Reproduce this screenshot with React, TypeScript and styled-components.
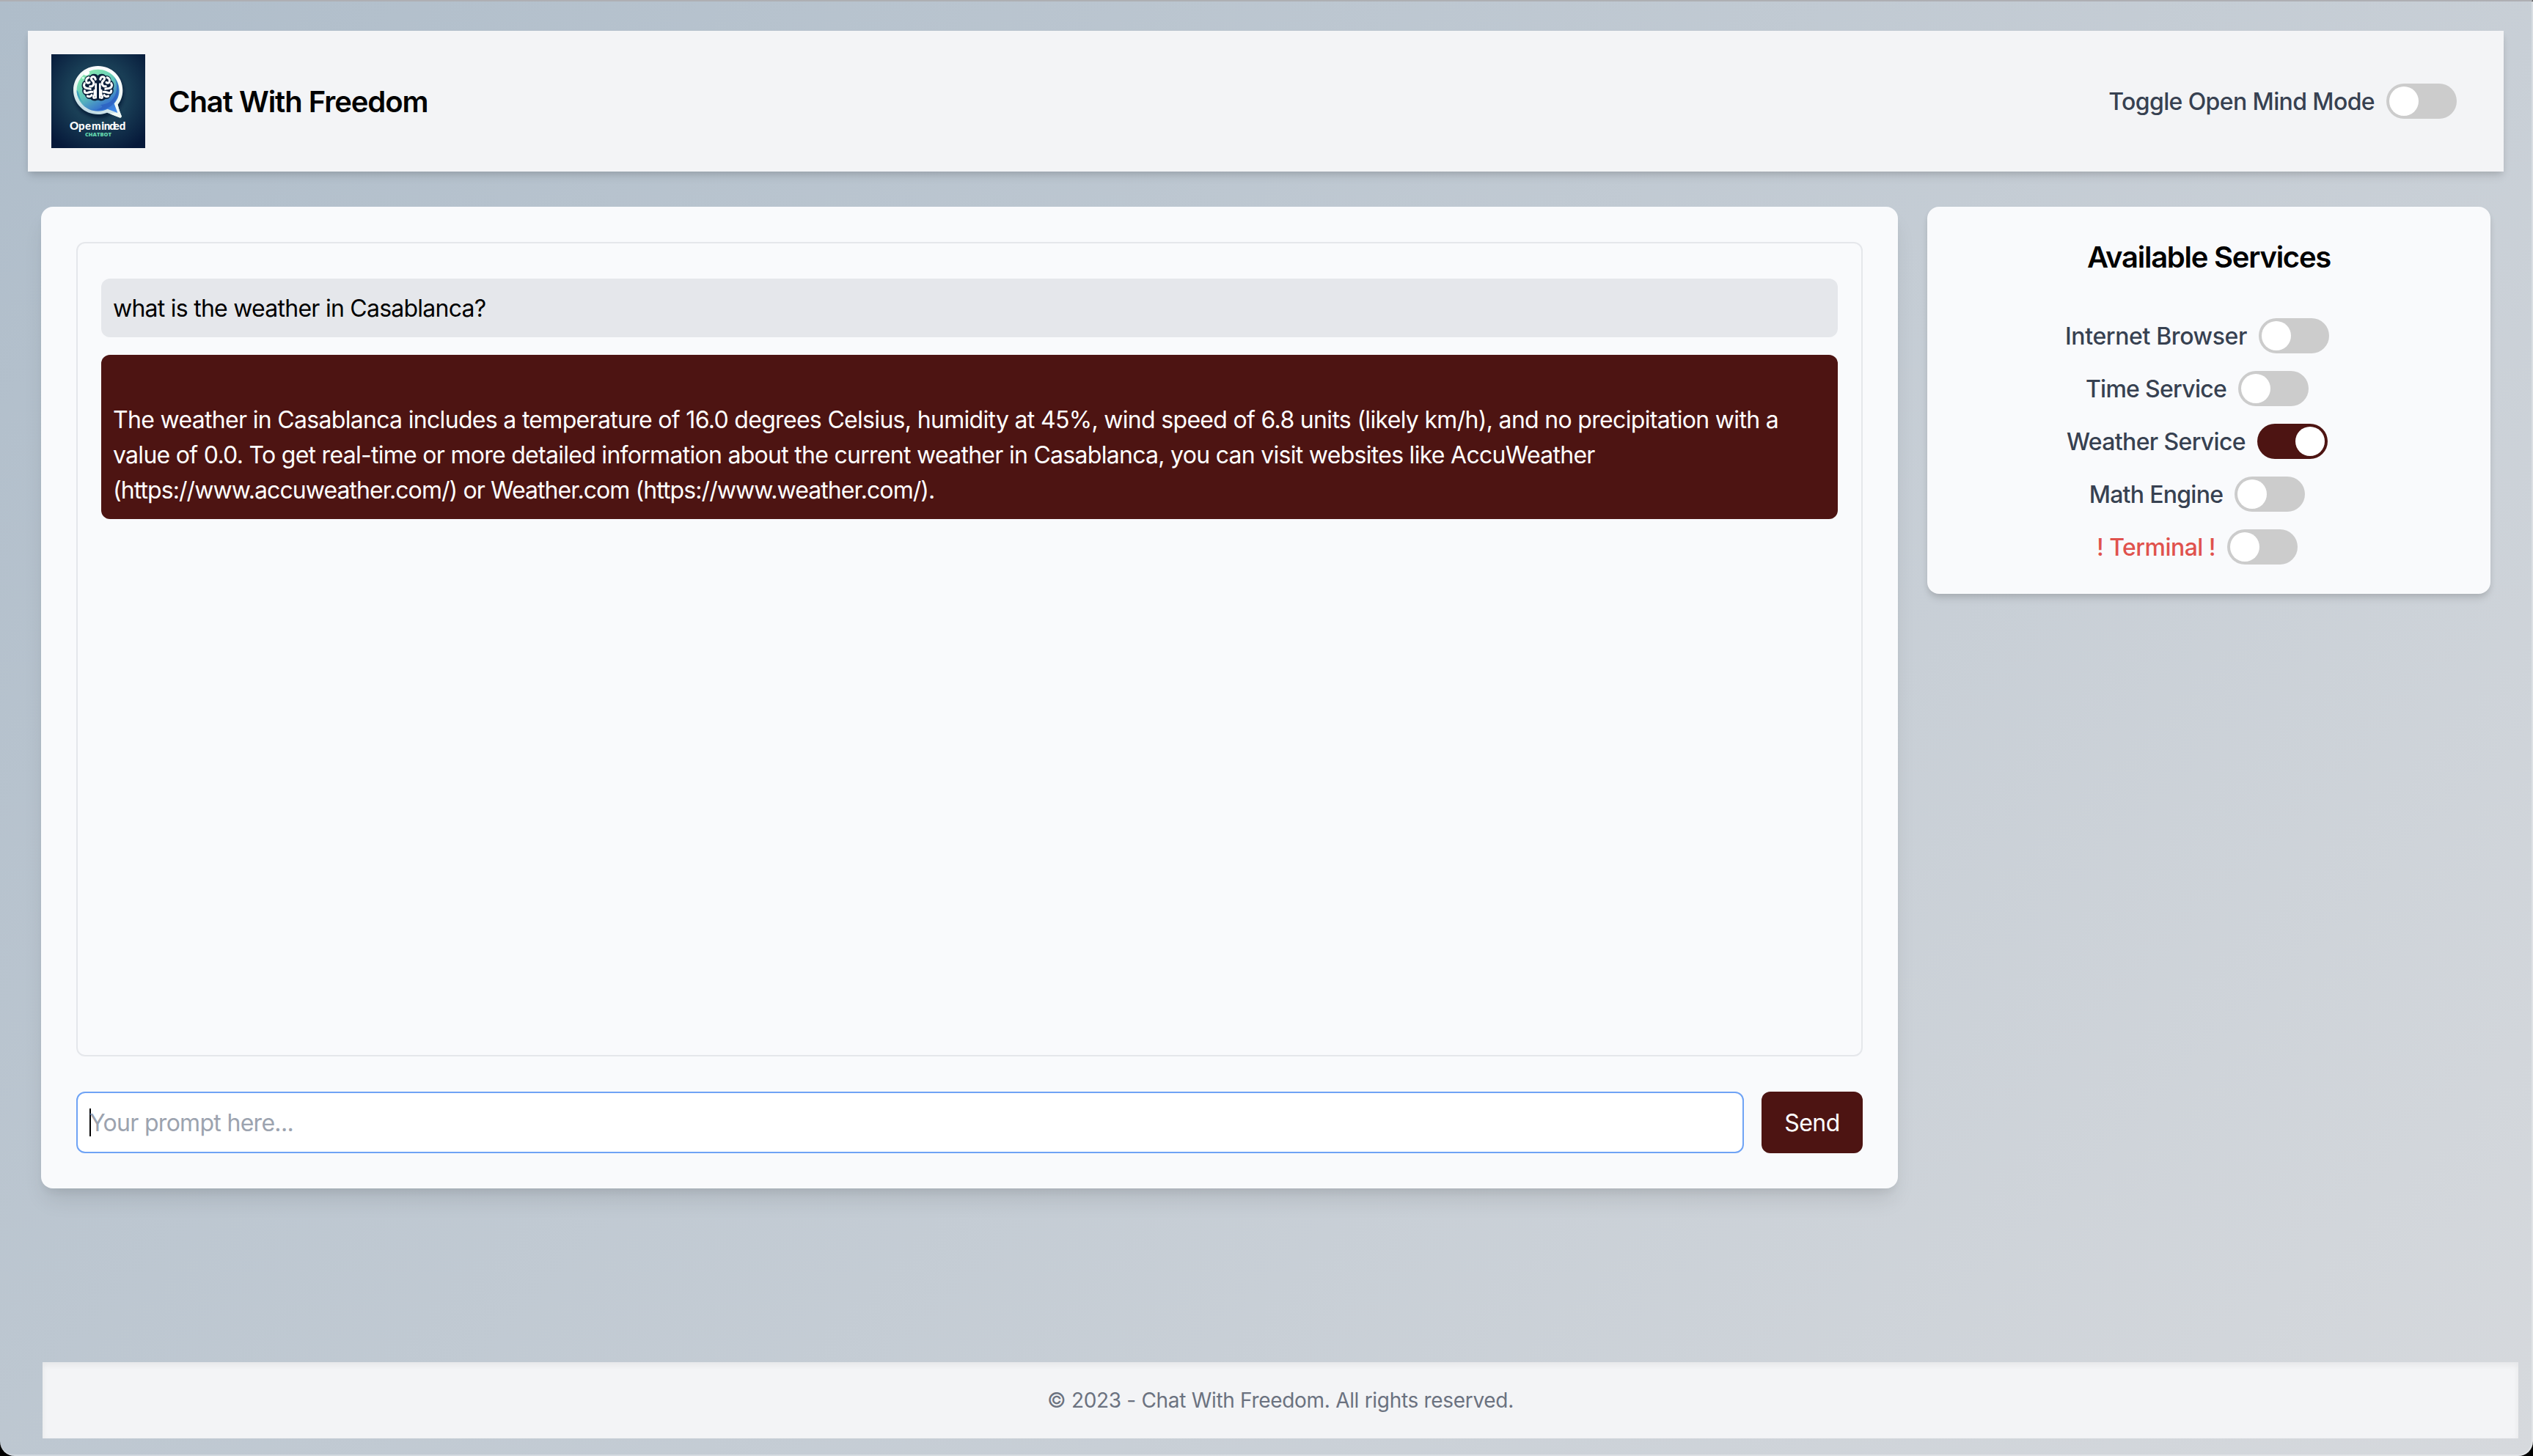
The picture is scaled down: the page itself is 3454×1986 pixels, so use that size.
import React from 'react';
import styled, { createGlobalStyle, css } from 'styled-components';

const maroon = '#4d1412';

const GlobalStyle = createGlobalStyle`
  *, *::before, *::after { box-sizing: border-box; }
  html, body { margin: 0; padding: 0; background: #000; overflow: hidden; }
  body { font-family: Inter, "Liberation Sans", sans-serif; font-size: 32px; line-height: 48px; color: #000; }
  h1, h2, p { margin: 0; }
`;

const Page = styled.div`
  display: flex;
  flex-direction: column;
  width: 3454px;
  height: 1986px;
  padding: 40px 18px 22px 38px;
  border: 2px solid rgba(255, 255, 255, 0.3);
  border-top-color: #aeafb3;
  border-left: 0;
  border-radius: 0 0 20px 20px;
  background: linear-gradient(135deg, #afbdca 0%, #d6d9dd 100%) border-box;
`;

const Header = styled.header`
  display: flex;
  align-items: center;
  width: 3376px;
  height: 192px;
  padding: 32px;
  background: #f3f4f6;
  box-shadow: 0 8px 12px -2px rgba(0, 0, 0, 0.1), 0 4px 8px -2px rgba(0, 0, 0, 0.1);
`;

const LogoSvg = styled.svg`
  display: block;
  flex: none;
  width: 128px;
  height: 128px;
`;

const Title = styled.h1`
  flex: 1;
  margin-left: 32px;
  padding-top: 2px;
  font-size: 40px;
  line-height: 56px;
  font-weight: 600;
  letter-spacing: -1.05px;
`;

const ToggleRow = styled.label`
  display: flex;
  align-items: center;
  gap: 16px;
  height: 48px;
  margin-right: 32px;
`;

const ToggleLabel = styled.span<{ $danger?: boolean; $tracking: number }>`
  padding-top: 2px;
  font-weight: 500;
  letter-spacing: ${(p) => p.$tracking}px;
  color: ${(p) => (p.$danger ? '#e0524d' : '#374151')};
`;

const Track = styled.span<{ $on?: boolean }>`
  display: flex;
  justify-content: ${(p) => (p.$on ? 'flex-end' : 'flex-start')};
  width: 96px;
  height: 48px;
  padding: 4px;
  border-radius: 24px;
  background: ${(p) => (p.$on ? maroon : '#ccc')};
`;

const Knob = styled.span`
  width: 40px;
  height: 40px;
  border-radius: 50%;
  background: #fff;
`;

const Main = styled.main`
  display: flex;
  align-items: flex-start;
  gap: 40px;
  margin: 48px 0 0 18px;
`;

const panel = css`
  border-radius: 16px;
  background: #f9fafc;
`;

const ChatCard = styled.section`
  ${panel}
  display: flex;
  flex-direction: column;
  gap: 48px;
  width: 2532px;
  height: 1339px;
  padding: 48px;
  box-shadow: 0 20px 30px -6px rgba(0, 0, 0, 0.1), 0 8px 12px -4px rgba(0, 0, 0, 0.06);
`;

const Messages = styled.div`
  flex: 1;
  display: flex;
  flex-direction: column;
  gap: 24px;
  padding: 48px 32px;
  border: 2px solid #e5e7eb;
  border-radius: 12px;
`;

const Message = styled.p<{ $bot?: boolean }>`
  padding: ${(p) => (p.$bot ? '65px 16px 15px' : '17px 16px 15px')};
  border-radius: 12px;
  color: ${(p) => (p.$bot ? '#fff' : '#000')};
  background: ${(p) => (p.$bot ? maroon : '#e5e7eb')};
`;

const Line = styled.span<{ $tracking: number }>`
  display: block;
  white-space: nowrap;
  letter-spacing: ${(p) => p.$tracking}px;
`;

const Composer = styled.form`
  display: flex;
  gap: 24px;
  height: 84px;
`;

const Prompt = styled.div`
  flex: 1;
  display: flex;
  align-items: center;
  padding: 0 16px;
  border: 2px solid #6fa3f5;
  border-radius: 12px;
  background: #fff;
  color: #9ca3af;
`;

const Caret = styled.span`
  width: 2px;
  height: 38px;
  margin-right: -2px;
  background: #000;
`;

const Placeholder = styled.span`
  padding-top: 2px;
  letter-spacing: -0.7px;
`;

const Send = styled.button`
  width: 138px;
  padding: 2px 0 0;
  border: 0;
  border-radius: 12px;
  background: ${maroon};
  color: #fff;
  font: 400 32px/48px Inter, "Liberation Sans", sans-serif;
  letter-spacing: -0.5px;
`;

const Services = styled.aside`
  ${panel}
  display: flex;
  flex-direction: column;
  align-items: center;
  gap: 24px;
  width: 768px;
  height: 528px;
  padding-top: 40px;
  box-shadow: 0 8px 12px -2px rgba(0, 0, 0, 0.1), 0 4px 8px -2px rgba(0, 0, 0, 0.1);
`;

const ServicesTitle = styled.h2`
  height: 56px;
  margin-bottom: 32px;
  padding-top: 1px;
  font-size: 40px;
  line-height: 56px;
  font-weight: 600;
  letter-spacing: -1.25px;
`;

const Footer = styled.footer`
  display: flex;
  align-items: center;
  justify-content: center;
  width: 3376px;
  height: 104px;
  margin: auto 0 0 20px;
  background: #f3f4f6;
  box-shadow: inset 0 4px 8px rgba(0, 0, 0, 0.06);
  color: #6b7280;
  font-size: 28px;
  line-height: 40px;
  letter-spacing: -0.31px;
`;

const BrainHalf = () => (
  <g>
    <path
      d="M221 112 C212 101 196 103 190 111 C176 109 166 119 166 131 C154 138 152 155 158 164 C154 176 159 187 168 191 C170 203 182 209 190 207 C198 217 214 216 221 209 Z"
      fill="#0b1f3a"
    />
    <g fill="none" stroke="#fff" strokeWidth="9" strokeLinecap="round" strokeLinejoin="round">
      <path d="M211 127 C208 112 194 115 193 124 C193 130 200 132 203 138 C206 148 198 158 188 155" />
      <path d="M183 119 C173 121 171 132 174 138 C177 143 183 142 186 139" />
      <path d="M166 143 C160 152 166 162 174 163 C180 165 186 163 190 166" />
      <path d="M166 173 C165 182 172 184 180 181 C186 179 192 176 198 178" />
      <path d="M178 195 C184 200 192 196 195 191" />
      <path d="M212 146 V202 M205 203 C200 201 202 194 206 190 C208 187 207 182 206 172" strokeWidth="8" />
    </g>
  </g>
);

const Logo = () => (
  <LogoSvg viewBox="30 24 384 384">
    <defs>
      <radialGradient id="night" cx="50%" cy="42%" r="68%">
        <stop offset="0" stopColor="#2b5568" />
        <stop offset="0.5" stopColor="#183c54" />
        <stop offset="1" stopColor="#06193a" />
      </radialGradient>
      <linearGradient id="sea" x1="0.25" y1="0" x2="0.8" y2="1">
        <stop offset="0" stopColor="#8bedaf" />
        <stop offset="0.45" stopColor="#5fc3b9" />
        <stop offset="0.8" stopColor="#3977cc" />
        <stop offset="1" stopColor="#3f8aea" />
      </linearGradient>
      <linearGradient id="rim" x1="0.7" y1="0" x2="0.35" y2="1">
        <stop offset="0" stopColor="#fff" />
        <stop offset="0.6" stopColor="#e8f5f1" />
        <stop offset="1" stopColor="#b4d2e0" />
      </linearGradient>
      <filter id="soft" x="-30%" y="-30%" width="160%" height="160%">
        <feGaussianBlur stdDeviation="7" />
      </filter>
    </defs>
    <rect x="30" y="24" width="384" height="384" fill="url(#night)" />
    <ellipse cx="224" cy="184" rx="103" ry="102" fill="#041530" opacity="0.75" filter="url(#soft)" />
    <path
      d="M221 72 C277 72 322 116 322 171 C322 196 314 215 302 230 C306 250 312 262 317 276 C318 283 313 285 308 283 L258 263 C246 268 234 270 221 270 C165 270 120 226 120 171 C120 116 165 72 221 72 Z"
      fill="url(#rim)"
    />
    <path d="M302 230 C306 250 312 262 317 276 C318 283 313 285 308 283 L270 268 L300 262 L288 228 Z" fill="#f1faf6" />
    <path
      d="M221 86 C269 86 308 124 308 171 C308 195 299 212 287 226 L301 264 L260 248 C248 254 235 257 221 257 C173 257 134 219 134 171 C134 124 173 86 221 86 Z"
      fill="url(#sea)"
    />
    <path
      d="M286 118 C305 148 300 190 276 214 C262 228 246 228 230 232 C246 236 236 246 214 250 C236 256 262 248 280 230 C310 200 314 150 286 118 Z"
      fill="#2b5fc0"
      opacity="0.75"
    />
    <path d="M134 170 C146 180 142 204 160 222 C144 210 132 192 134 170 Z" fill="#3b9fbd" />
    <ellipse cx="175" cy="102" rx="12" ry="8" transform="rotate(-25 175 102)" fill="#fff" />
    <circle cx="160" cy="121" r="4.5" fill="#d9ffec" />
    <BrainHalf />
    <g transform="translate(441 0) scale(-1 1)">
      <BrainHalf />
    </g>
    <path d="M220.500 128 V212" stroke="#0b1f3a" strokeWidth="6" />
    <text
      x="105 141 168 195 235 245 268 284 308"
      y="333"
      fontFamily="Lato, sans-serif"
      fontWeight="900"
      fontSize="45"
      fill="#fff"
    >
      Opeminded
    </text>
    <text
      x="168"
      y="359"
      textLength="108"
      lengthAdjust="spacingAndGlyphs"
      fontFamily="Open Sans, sans-serif"
      fontWeight="800"
      fontSize="19"
      fill="#62d6ac"
    >
      CHATBOT
    </text>
  </LogoSvg>
);

type ToggleProps = { label: string; tracking: number; on?: boolean; danger?: boolean };

const Toggle = ({ label, tracking, on, danger }: ToggleProps) => (
  <ToggleRow>
    <ToggleLabel $danger={danger} $tracking={tracking}>
      {label}
    </ToggleLabel>
    <Track $on={on}>
      <Knob />
    </Track>
  </ToggleRow>
);

const services: ToggleProps[] = [
  { label: 'Internet Browser', tracking: -0.38 },
  { label: 'Time Service', tracking: -0.71 },
  { label: 'Weather Service', tracking: -0.65, on: true },
  { label: 'Math Engine', tracking: -0.72 },
  { label: '! Terminal !', tracking: -0.54, danger: true },
];

const reply = [
  {
    text: 'The weather in Casablanca includes a temperature of 16.0 degrees Celsius, humidity at 45%, wind speed of 6.8 units (likely km/h), and no precipitation with a',
    tracking: -0.685,
  },
  {
    text: 'value of 0.0. To get real-time or more detailed information about the current weather in Casablanca, you can visit websites like AccuWeather',
    tracking: -0.715,
  },
  {
    text: '(https://www.accuweather.com/) or Weather.com (https://www.weather.com/).',
    tracking: -0.92,
  },
];

export default function App() {
  return (
    <>
      <GlobalStyle />
      <Page>
        <Header>
          <Logo />
          <Title>Chat With Freedom</Title>
          <Toggle label="Toggle Open Mind Mode" tracking={-0.61} />
        </Header>
        <Main>
          <ChatCard>
            <Messages>
              <Message>
                <Line $tracking={-0.75}>what is the weather in Casablanca?</Line>
              </Message>
              <Message $bot>
                {reply.map((line) => (
                  <Line key={line.text} $tracking={line.tracking}>
                    {line.text}
                  </Line>
                ))}
              </Message>
            </Messages>
            <Composer>
              <Prompt>
                <Caret />
                <Placeholder>Your prompt here...</Placeholder>
              </Prompt>
              <Send type="button">Send</Send>
            </Composer>
          </ChatCard>
          <Services>
            <ServicesTitle>Available Services</ServicesTitle>
            {services.map((s) => (
              <Toggle key={s.label} {...s} />
            ))}
          </Services>
        </Main>
        <Footer>© 2023 - Chat With Freedom. All rights reserved.</Footer>
      </Page>
    </>
  );
}
